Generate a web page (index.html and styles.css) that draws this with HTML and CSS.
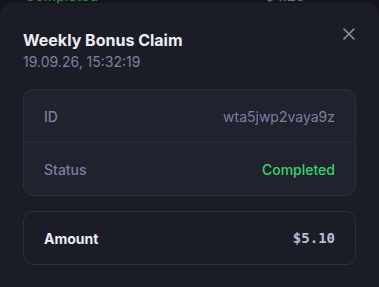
FILE: index.html
```html
<!DOCTYPE html>
<html>
<head>
<meta charset="utf-8">
<link rel="stylesheet" href="styles.css">
</head>
<body>
<div class="page">
  <div class="bg-row">
    <span class="bg-status">Completed</span>
    <span class="bg-amount">$4.23</span>
  </div>
</div>
<div class="modal">
  <div class="header">
    <div class="titles">
      <div class="title">Weekly Bonus Claim</div>
      <div class="date">19.09.26, 15:32:19</div>
    </div>
    <button class="close" aria-label="Close">
      <svg width="14" height="14" viewBox="0 0 14 14"><path d="M2 2L12 12M12 2L2 12" stroke="#8a90ad" stroke-width="1.6" stroke-linecap="round" fill="none"/></svg>
    </button>
  </div>
  <div class="card">
    <div class="row">
      <span class="label">ID</span>
      <span class="value">wta5jwp2vaya9z</span>
    </div>
    <div class="row">
      <span class="label">Status</span>
      <span class="value green">Completed</span>
    </div>
  </div>
  <div class="card plain">
    <div class="row">
      <span class="label strong">Amount</span>
      <span class="value mono">$5.10</span>
    </div>
  </div>
</div>
</body>
</html>
```
FILE: styles.css
```css
html, body {
  margin: 0;
  padding: 0;
}
body {
  width: 379px;
  height: 287px;
  overflow: hidden;
  background: #14151b;
  font-family: Inter, "Noto Sans", sans-serif;
  position: relative;
}
.page {
  height: 287px;
}
.bg-row {
  display: flex;
  margin-top: -13px;
  padding-left: 25px;
  font-size: 14px;
  font-weight: 500;
}
.bg-status {
  color: #238641;
  width: 240px;
}
.bg-amount {
  color: #6b7088;
}
.modal {
  position: absolute;
  top: 3px;
  left: 0;
  right: 0;
  bottom: 0;
  background: #1b1d26;
  border-radius: 12px 12px 0 0;
  padding: 0 23px;
}
.header {
  display: flex;
  justify-content: space-between;
  align-items: flex-start;
  padding-top: 27px;
  margin-bottom: 18px;
}
.title {
  color: #ececf2;
  font-size: 16px;
  font-weight: 700;
  line-height: 20px;
}
.date {
  color: #7a80a2;
  font-size: 14px;
  line-height: 18px;
  margin-top: 3px;
}
.close {
  background: none;
  border: none;
  padding: 0;
  margin-top: -3px;
  width: 14px;
  height: 14px;
  display: flex;
}
.card {
  background: #20222d;
  border: 1px solid #2b2e3b;
  border-radius: 10px;
  margin-bottom: 15px;
}
.card.plain {
  background: #1b1d26;
}
.row {
  display: flex;
  justify-content: space-between;
  align-items: center;
  height: 52px;
  padding: 0 20px;
}
.row + .row {
  border-top: 1px solid #292c38;
}
.label {
  color: #7a80a2;
  font-size: 14px;
  font-weight: 500;
}
.label.strong {
  color: #ececf2;
  font-weight: 700;
}
.value {
  color: #7a80a2;
  font-size: 14px;
}
.value.green {
  color: #34d564;
  font-weight: 500;
}
.value.mono {
  font-family: "DejaVu Sans Mono", "Liberation Mono", monospace;
  font-weight: 700;
  color: #b9bed6;
  font-size: 14px;
}
```
